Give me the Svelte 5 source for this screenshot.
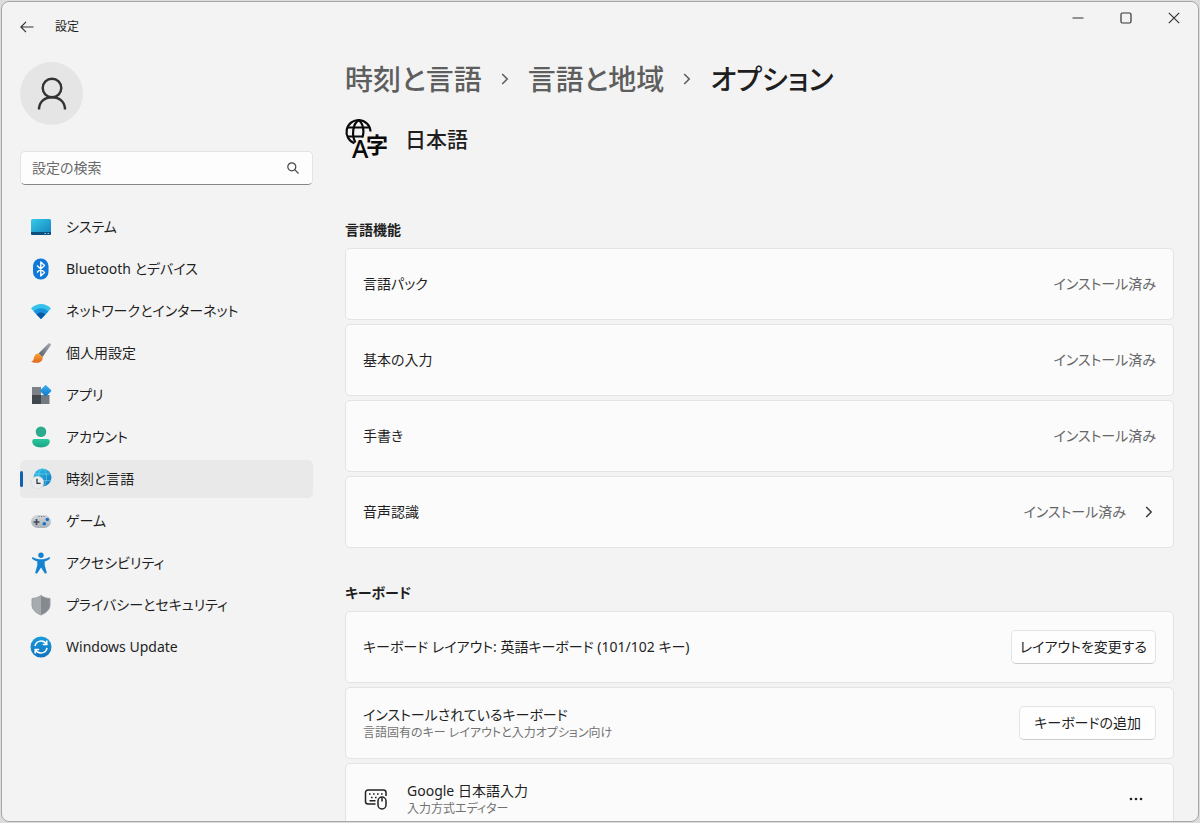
<script>
  const navItems = [
    { id: 'system', label: 'システム' },
    { id: 'bluetooth', label: 'Bluetooth とデバイス' },
    { id: 'network', label: 'ネットワークとインターネット' },
    { id: 'personal', label: '個人用設定' },
    { id: 'apps', label: 'アプリ' },
    { id: 'accounts', label: 'アカウント' },
    { id: 'time', label: '時刻と言語' },
    { id: 'gaming', label: 'ゲーム' },
    { id: 'access', label: 'アクセシビリティ' },
    { id: 'privacy', label: 'プライバシーとセキュリティ' },
    { id: 'update', label: 'Windows Update' }
  ];

  const features = [
    { name: '言語パック', status: 'インストール済み' },
    { name: '基本の入力', status: 'インストール済み' },
    { name: '手書き', status: 'インストール済み' },
    { name: '音声認識', status: 'インストール済み', more: true }
  ];

  let current = $state('time');
  let query = $state('');
</script>

{#snippet navIcon(id)}
  <svg class="nav-icon" viewBox="0 0 22 22" aria-hidden="true">
    {#if id === 'system'}
      <rect x="1" y="3" width="20" height="16" rx="1.5" fill="url(#g-screen)" />
      <path d="M1 16h20v1.5a1.5 1.5 0 0 1-1.5 1.5h-17A1.5 1.5 0 0 1 1 17.500z" fill="#0d4f7c" />
      <path d="M14.500 17.500h1.500M17.500 17.500h1.500" stroke="#8fd3ee" />
    {:else if id === 'bluetooth'}
      <rect x="3" y="0.500" width="15.500" height="21" rx="7.500" fill="#0f78d8" />
      <path d="M7 7.500l7.500 7-3.700 3.500V4l3.700 3.500L7 14.500" fill="none" stroke="#fff" stroke-width="1.400" stroke-linejoin="round" />
    {:else if id === 'network'}
      <path d="M11 19L1 8.600C6.500 2.600 15.500 2.600 21 8.600z" fill="#35c1ea" />
      <path d="M11 19L3.700 11.400C7.700 7.200 14.300 7.200 18.300 11.400z" fill="#1993dc" />
      <path d="M11 19L6.600 14.400C9 12 13 12 15.400 14.400z" fill="#0c59a4" />
    {:else if id === 'personal'}
      <path d="M8.500 11.500L18.500 1.500c1-1 3 .3 2.300 1.700L12.500 15z" fill="url(#g-handle)" />
      <path d="M8.500 11.300l4.200 3.600c.4 3-2 5.700-5.400 5.900-2.300.2-4.800-.2-6.300-1.300 2-.4 2.400-1.400 2.900-3.600.5-2.700 2.400-4.500 4.600-4.600z" fill="url(#g-bristle)" />
    {:else if id === 'apps'}
      <rect x="2" y="3" width="9" height="8" fill="#7c8189" />
      <rect x="2" y="11" width="9" height="9" fill="#42464d" />
      <rect x="11" y="11" width="8.500" height="9" fill="#737980" />
      <rect x="11.500" y="2.500" width="8.500" height="8.500" rx="1" transform="rotate(45 15.700 6.700)" fill="url(#g-tile)" />
    {:else if id === 'accounts'}
      <circle cx="11" cy="5.800" r="5.300" fill="#2cab8c" />
      <path d="M4.500 13h13a2.300 2.300 0 0 1 2.300 2.300c0 3.800-3.600 6.200-8.800 6.200s-8.800-2.400-8.800-6.200A2.300 2.300 0 0 1 4.500 13z" fill="url(#g-body)" />
    {:else if id === 'time'}
      <circle cx="12.500" cy="9.500" r="9" fill="url(#g-globe)" />
      <g fill="none" stroke="#8ce0f4" stroke-opacity=".6" stroke-width=".8">
        <ellipse cx="12.500" cy="9.500" rx="4" ry="9" />
        <path d="M4.500 6h16M3.500 12.500h18" />
      </g>
      <circle cx="7.500" cy="14.500" r="6.300" fill="#e9ebed" stroke="#cfd4d8" stroke-width=".5" />
      <path d="M7 10.800v4.500h3.600" fill="none" stroke="#343a40" stroke-width="1.300" />
    {:else if id === 'gaming'}
      <rect x="1" y="5" width="20" height="13" rx="6.500" fill="url(#g-pad)" />
      <path d="M6.500 9v6M3.500 12h6" stroke="#454b55" stroke-width="1.700" />
      <circle cx="17.300" cy="9.500" r="1.800" fill="#1b72c4" />
      <circle cx="14.300" cy="13.700" r="1.800" fill="#1b72c4" />
      <path d="M8.500 6.500h1M11 6.500h1M13.500 6.500h1" stroke="#5f6771" />
    {:else if id === 'access'}
      <circle cx="11" cy="3.200" r="2.700" fill="#1683d0" />
      <path d="M3.200 5.200c2.400 1.500 5 2 7.800 2s5.400-.5 7.800-2c1-.4 1.700 1 .8 1.700-1.500 1.200-3.200 2-4.900 2.500v3.800l2 7c.3 1.400-1.600 2-2.200.7L11 15.500 7.500 20.900c-.6 1.300-2.500.7-2.200-.7l2-7V9.400C5.600 8.900 3.900 8.100 2.400 6.900c-.9-.7-.2-2.100.8-1.700z" fill="#1683d0" />
    {:else if id === 'privacy'}
      <path d="M11 1.500c2.700 2 5.800 2.800 9 3v6.300c0 4.600-3.500 8-9 10.200z" fill="#858a91" />
      <path d="M11 1.500c-2.700 2-5.800 2.800-9 3v6.300c0 4.600 3.500 8 9 10.200z" fill="#a7abb0" />
      <path d="M11 1.500c2.700 2 5.800 2.800 9 3v6.300c0 4.600-3.500 8-9 10.200-5.500-2.200-9-5.600-9-10.200V4.500c3.200-.2 6.300-1 9-3z" fill="none" stroke="#9a9ea4" />
    {:else if id === 'update'}
      <circle cx="11" cy="11" r="10.500" fill="url(#g-update)" />
      <g fill="none" stroke="#fff" stroke-width="1.500">
        <path d="M5 10.200C6 4.300 13.300 3.300 16.500 8M16.800 4.500V8.500h-4" />
        <path d="M17 11.800c-1 5.900-8.300 6.900-11.500 2.200M5.200 17.500v-4h4" />
      </g>
    {/if}
  </svg>
{/snippet}

<svg class="defs" width="0" height="0" aria-hidden="true">
  <defs>
    <linearGradient id="g-screen" x1="0" y1="0" x2="1" y2="1"><stop stop-color="#35cbe8" /><stop offset="1" stop-color="#1380bd" /></linearGradient>
    <linearGradient id="g-handle" x1="0" y1="1" x2="1" y2="0"><stop stop-color="#555d68" /><stop offset="1" stop-color="#a5adb5" /></linearGradient>
    <linearGradient id="g-bristle" x1="0" y1="0" x2="0" y2="1"><stop stop-color="#f8a436" /><stop offset="1" stop-color="#e0661c" /></linearGradient>
    <linearGradient id="g-tile" x1="0" y1="0" x2="1" y2="1"><stop stop-color="#3bb2ef" /><stop offset="1" stop-color="#0f74cb" /></linearGradient>
    <linearGradient id="g-body" x1="0" y1="0" x2="0" y2="1"><stop stop-color="#2ac79e" /><stop offset="1" stop-color="#1da384" /></linearGradient>
    <linearGradient id="g-globe" x1="0" y1="0" x2="1" y2="1"><stop stop-color="#35c5e6" /><stop offset="1" stop-color="#0c73bd" /></linearGradient>
    <linearGradient id="g-pad" x1="0" y1="0" x2="0" y2="1"><stop stop-color="#d3d7dc" /><stop offset="1" stop-color="#aab0b8" /></linearGradient>
    <linearGradient id="g-update" x1="0" y1="0" x2="0" y2="1"><stop stop-color="#1b9bdc" /><stop offset="1" stop-color="#1272bd" /></linearGradient>
  </defs>
</svg>

<div class="window">
  <header class="titlebar">
    <button class="back" aria-label="戻る">
      <svg width="14" height="12" viewBox="0 0 14 12"><path d="M6 .8L.9 6 6 11.200M1 6h12.500" /></svg>
    </button>
    <span class="app-name">設定</span>
    <div class="caption">
      <button aria-label="最小化"><svg width="12" height="12" viewBox="0 0 12 12"><path d="M.5 6h11" /></svg></button>
      <button aria-label="最大化"><svg width="12" height="12" viewBox="0 0 12 12"><rect x="1" y="1" width="10" height="10" rx="1.500" /></svg></button>
      <button aria-label="閉じる"><svg width="12" height="12" viewBox="0 0 12 12"><path d="M.8.8l10.400 10.400M11.200.8L.8 11.200" /></svg></button>
    </div>
  </header>

  <div class="body">
    <aside class="sidebar">
      <div class="avatar">
        <svg width="30" height="34" viewBox="0 0 30 34"><circle cx="15" cy="11" r="9.300" /><path d="M2 32.500c0-7.500 5.300-12.200 13-12.200s13 4.700 13 12.200" /></svg>
      </div>

      <div class="search">
        <input type="text" placeholder="設定の検索" aria-label="設定の検索" bind:value={query} />
        <svg width="12" height="12" viewBox="0 0 12 12"><circle cx="4.800" cy="4.800" r="4" /><path d="M7.700 7.700l3.800 3.800" /></svg>
      </div>

      <nav>
        {#each navItems as item}
          <a href="#{item.id}" class="nav-item" class:active={current === item.id} onclick={() => (current = item.id)}>
            {@render navIcon(item.id)}
            <span>{item.label}</span>
          </a>
        {/each}
      </nav>
    </aside>

    <main>
      <h1 class="breadcrumb">
        <a href="#time">時刻と言語</a>
        <svg width="8" height="12" viewBox="0 0 8 12"><path d="M1.200 1l5 5-5 5" /></svg>
        <a href="#region">言語と地域</a>
        <svg width="8" height="12" viewBox="0 0 8 12"><path d="M1.200 1l5 5-5 5" /></svg>
        <span>オプション</span>
      </h1>

      <div class="language">
        <svg class="lang-icon" width="44" height="42" viewBox="0 0 44 42" aria-hidden="true">
          <g fill="none" stroke="#0a0a0a" stroke-width="2.200">
            <path d="M9.500 25.300A12 12 0 1 1 25.500 13.500" />
            <path d="M10.500 24.500C6.500 18 7.500 6 13.500 2.200c3.500 2.300 5 6.800 4.900 11.800-.1 3-.5 4-1 5.500" />
            <path d="M2.500 9.500h22M2.500 18.500h15.500" />
          </g>
          <text x="7" y="40" font-size="25" font-weight="500">A</text>
          <text x="21" y="35" font-size="22" font-weight="600">字</text>
        </svg>
        <h2>日本語</h2>
      </div>

      <section>
        <h3>言語機能</h3>
        {#each features as f}
          <div class="card">
            <span class="name">{f.name}</span>
            <span class="status">{f.status}</span>
            {#if f.more}
              <button class="chevron" aria-label="{f.name}の詳細">
                <svg width="8" height="12" viewBox="0 0 8 12"><path d="M1.200 1l5 5-5 5" /></svg>
              </button>
            {/if}
          </div>
        {/each}
      </section>

      <section>
        <h3>キーボード</h3>
        <div class="card">
          <span class="name">キーボード レイアウト: 英語キーボード (101/102 キー)</span>
          <button class="btn">レイアウトを変更する</button>
        </div>
        <div class="card">
          <div class="name">
            <div>インストールされているキーボード</div>
            <div class="sub">言語固有のキー レイアウトと入力オプション向け</div>
          </div>
          <button class="btn wide">キーボードの追加</button>
        </div>
        <div class="card">
          <svg class="kb-icon" width="24" height="22" viewBox="0 0 24 22" aria-hidden="true">
            <path d="M11.500 16H4a2.500 2.500 0 0 1-2.500-2.500v-9A2.500 2.500 0 0 1 4 2h15.500A2.500 2.500 0 0 1 22 4.500V8" />
            <path d="M5 6h1.600M9 6h1.600M13 6h1.600M17 6h1.600M7 9.500h1.600M11 9.500h1.600M5.500 12.800h6" />
            <rect x="14" y="9" width="8" height="12" rx="4" />
            <path d="M18 9.500v4" />
          </svg>
          <div class="name">
            <div>Google 日本語入力</div>
            <div class="sub">入力方式エディター</div>
          </div>
          <button class="dots" aria-label="その他のオプション">
            <svg width="14" height="4" viewBox="0 0 14 4"><circle cx="2" cy="2" r="1.300" /><circle cx="7" cy="2" r="1.300" /><circle cx="12" cy="2" r="1.300" /></svg>
          </button>
        </div>
      </section>
    </main>
  </div>
</div>

<style>
  :global(body) {
    padding: 1px;
    background: #dcdcdc;
  }

  .defs {
    position: absolute;
  }

  .window {
    box-sizing: border-box;
    height: calc(100vh - 2px);
    display: flex;
    flex-direction: column;
    overflow: hidden;
    background: #f3f3f3;
    border: 1px solid #a8a8a8;
    border-radius: 8px;
    font-family: "Noto Sans", "Noto Sans CJK JP", sans-serif;
    font-feature-settings: "palt";
    font-size: 14px;
    line-height: 20px;
    color: #1f1f1f;
  }

  button {
    font: inherit;
    color: inherit;
    background: none;
    border: none;
    padding: 0;
  }

  a {
    color: inherit;
    text-decoration: none;
  }

  svg {
    display: block;
    flex: none;
  }

  h1, h2, h3 {
    margin: 0;
  }

  .titlebar {
    flex: none;
    height: 50px;
    display: flex;
    align-items: center;
  }

  .titlebar svg {
    fill: none;
    stroke: #333;
    stroke-width: 1.2;
  }

  .back {
    width: 50px;
    height: 36px;
    display: grid;
    place-items: center;
  }

  .app-name {
    flex: 1;
    padding-left: 3px;
    font-size: 12px;
  }

  .caption {
    display: flex;
    align-self: flex-start;
  }

  .caption button {
    width: 48px;
    height: 32px;
    display: grid;
    place-items: center;
  }

  .body {
    flex: 1;
    min-height: 0;
    display: grid;
    grid-template-columns: 293px 1fr;
    gap: 32px;
    padding: 0 24px 0 18px;
  }

  .sidebar {
    padding-top: 10px;
  }

  .avatar {
    width: 63px;
    height: 63px;
    border-radius: 50%;
    background: #e5e5e5;
    display: grid;
    place-items: center;
  }

  .avatar svg {
    fill: none;
    stroke: #333;
    stroke-width: 2.4;
  }

  .search {
    box-sizing: border-box;
    height: 34px;
    margin-top: 26px;
    padding: 0 13px 0 11px;
    display: flex;
    align-items: center;
    background: #fdfdfd;
    border: 1px solid #e3e3e3;
    border-bottom-color: #868686;
    border-radius: 5px;
  }

  .search input {
    flex: 1;
    min-width: 0;
    padding: 0;
    border: none;
    outline: none;
    background: none;
    font: inherit;
    font-feature-settings: inherit;
    color: inherit;
  }

  .search input::placeholder {
    color: #6a6a6a;
    opacity: 1;
  }

  .search svg {
    fill: none;
    stroke: #444;
    stroke-width: 1.2;
  }

  nav {
    margin-top: 23px;
    display: flex;
    flex-direction: column;
    gap: 4px;
  }

  .nav-item {
    position: relative;
    height: 38px;
    display: flex;
    align-items: center;
    gap: 14px;
    padding-left: 10px;
    border-radius: 5px;
  }

  .nav-item.active {
    background: #e9e9e9;
  }

  .nav-item.active::before {
    content: "";
    position: absolute;
    left: 0;
    top: 11px;
    width: 3px;
    height: 16px;
    border-radius: 2px;
    background: #1062ac;
  }

  .nav-icon {
    width: 22px;
    height: 22px;
  }

  .breadcrumb {
    display: flex;
    align-items: center;
    height: 54px;
    font-size: 28px;
    line-height: 40px;
    font-weight: 500;
  }

  .breadcrumb a {
    color: #5e5e5e;
  }

  .breadcrumb svg {
    margin: 0 19px;
    fill: none;
    stroke: #5e5e5e;
    stroke-width: 1.6;
  }

  .language {
    display: flex;
    align-items: center;
    gap: 16px;
    height: 42px;
    margin-top: 12px;
  }

  .lang-icon {
    overflow: visible;
    fill: #0a0a0a;
  }

  h2 {
    font-size: 21px;
    line-height: 28px;
    font-weight: 500;
  }

  section {
    display: flex;
    flex-direction: column;
    gap: 4px;
    margin-top: 35px;
  }

  .language + section {
    margin-top: 60px;
  }

  h3 {
    font-size: 14px;
    line-height: 20px;
    font-weight: 600;
    margin-bottom: 4px;
  }

  .card {
    box-sizing: border-box;
    min-height: 72px;
    display: flex;
    align-items: center;
    padding: 0 17px;
    background: #fbfbfb;
    border: 1px solid #e4e4e4;
    border-radius: 5px;
  }

  .name {
    flex: 1;
  }

  .status {
    color: #666;
  }

  .sub {
    font-size: 12px;
    line-height: 16px;
    color: #727272;
  }

  .chevron {
    margin-left: 16px;
    width: 14px;
    height: 20px;
    display: grid;
    place-items: center;
  }

  .chevron svg {
    fill: none;
    stroke: #333;
    stroke-width: 1.4;
  }

  .btn {
    height: 34px;
    padding: 0 8px;
    font-feature-settings: inherit;
    background: #fefefe;
    border: 1px solid #e3e3e3;
    border-bottom-color: #cccccc;
    border-radius: 5px;
  }

  .btn.wide {
    padding: 0 14px;
  }

  .kb-icon {
    margin: 0 19px 0 1px;
    fill: none;
    stroke: #222;
    stroke-width: 1.5;
  }

  .dots {
    width: 40px;
    height: 32px;
    display: grid;
    place-items: center;
  }

  .dots svg {
    fill: #222;
  }
</style>
